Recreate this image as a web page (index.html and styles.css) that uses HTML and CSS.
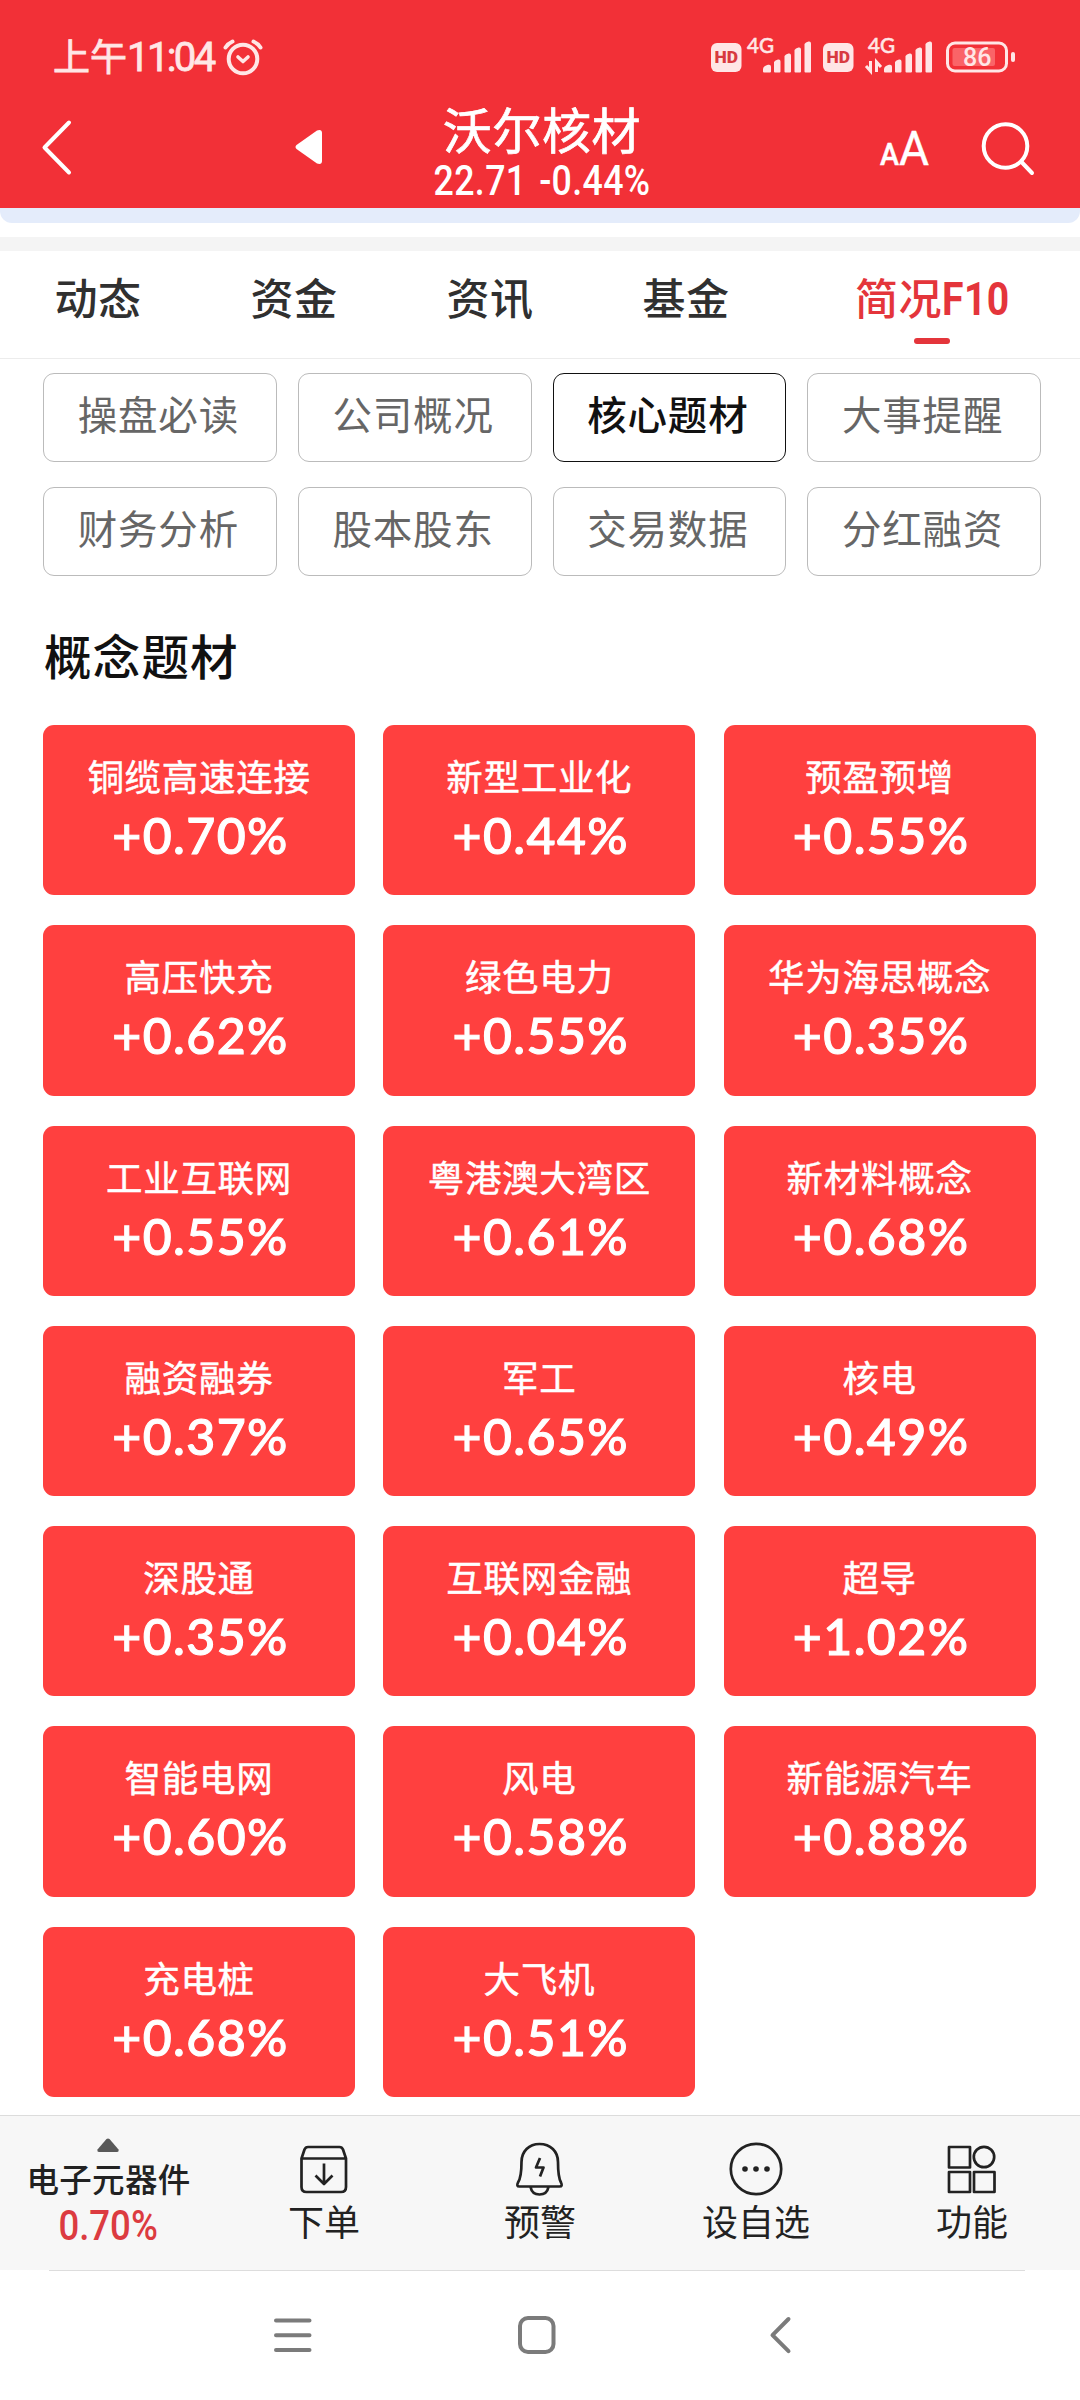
FILE: index.html
```html
<!DOCTYPE html>
<html lang="zh-CN">
<head>
  <meta charset="UTF-8">
  <meta name="viewport" content="width=device-width, initial-scale=1.0">
  <link rel="stylesheet" href="styles.css">
  <title>沃尔核材</title>
</head>
<body>
  <header>
    <div class="status-bar">
      <div class="status-time">上午<span>11:04</span></div>
      <svg class="alarm" width="40" height="38" viewBox="0 0 40 38" fill="none" stroke="#ffe6e6" stroke-width="4" stroke-linecap="round" stroke-linejoin="round">
        <circle cx="20" cy="21" r="14.3"/>
        <path d="M15 19l5 4.500 5-4.500" stroke-width="3.600"/>
        <path d="M2.500 9.500Q5 5.500 9.500 3.500M37.500 9.500Q35 5.500 30.500 3.500"/>
      </svg>
      <svg class="signals" width="310" height="44" viewBox="0 0 310 44" fill="#ffe6e6">
        <rect x="1" y="9" width="30.500" height="29" rx="6"/>
        <text class="hd" x="4.500" y="29" textLength="23.500" lengthAdjust="spacingAndGlyphs">HD</text>
        <text class="net" x="37" y="19" textLength="27" lengthAdjust="spacingAndGlyphs">4G</text>
        <path id="bars" d="M53 37.500v-2q0-3 3-4l2-.7q3-.7 3 2v4.700q0 1-1 1h-6q-1 0-1-1zM64 28q1-2 4-2.500 2.500-.5 2.500 2v10q0 1-1 1H65q-1 0-1-1zM74.500 22q1-2 4-2.500 2.500-.5 2.500 2v16q0 1-1 1h-4.500q-1 0-1-1zM84.500 16q1-2 4-2.500 2.500-.5 2.500 2v22q0 1-1 1h-4.500q-1 0-1-1zM94.500 10q1-2 4-2.500 2.500-.5 2.500 2v28q0 1-1 1h-4.500q-1 0-1-1z"/>
        <rect x="113" y="9" width="30.500" height="29" rx="6"/>
        <text class="hd" x="116.500" y="29" textLength="23.500" lengthAdjust="spacingAndGlyphs">HD</text>
        <text class="net" x="158" y="19" textLength="27" lengthAdjust="spacingAndGlyphs">4G</text>
        <use href="#bars" x="121"/>
        <path d="M160.500 27v10l-4.500-5M166.500 38V28l4.500 5" fill="none" stroke="#ffe6e6" stroke-width="3"/>
        <rect x="237.500" y="9" width="59" height="28" rx="7.500" fill="none" stroke="#ffe6e6" stroke-width="3"/>
        <rect x="242.500" y="14" width="42.500" height="18" rx="2" fill="#fa6468"/>
        <rect x="301" y="18" width="4" height="10" rx="2"/>
        <text class="level" x="253" y="32" textLength="28.500" lengthAdjust="spacingAndGlyphs">86</text>
      </svg>
    </div>
    <div class="title-bar">
      <svg class="back" width="34" height="56" viewBox="0 0 34 56" fill="none" stroke="#fff" stroke-width="4" stroke-linecap="round" stroke-linejoin="round">
        <path d="M28 3.500L3.500 28.500 28 53.500"/>
      </svg>
      <svg class="prev" width="28" height="36" viewBox="0 0 28 36" fill="#fff">
        <path d="M1.500 16Q-.5 18 1.500 20L22 34.500Q27 36 27 32V4Q27 0 22 1.500z"/>
      </svg>
      <div class="stock">
        <h1>沃尔核材</h1>
        <div class="quote"><span>22.71</span><span>-0.44%</span></div>
      </div>
      <svg class="font-size" width="50" height="60" viewBox="0 0 50 60" fill="#fff">
        <text x="0" y="50" font-size="32" font-weight="500" textLength="19" lengthAdjust="spacingAndGlyphs">A</text>
        <text x="19" y="50" font-size="49" textLength="30" lengthAdjust="spacingAndGlyphs">A</text>
      </svg>
      <svg class="search" width="56" height="56" viewBox="0 0 56 56" fill="none" stroke="#fff" stroke-width="4" stroke-linecap="round">
        <circle cx="25.500" cy="26" r="21.800"/>
        <path d="M41.500 42l10.500 11"/>
      </svg>
    </div>
  </header>

  <main>
    <div class="banner"></div>
    <div class="divider"></div>
    <nav class="tabs">
      <a>动态</a>
      <a>资金</a>
      <a>资讯</a>
      <a>基金</a>
      <a class="active">简况<span>F10</span></a>
    </nav>

    <div class="sections">
      <button>操盘必读</button>
      <button>公司概况</button>
      <button class="selected">核心题材</button>
      <button>大事提醒</button>
      <button>财务分析</button>
      <button>股本股东</button>
      <button>交易数据</button>
      <button>分红融资</button>
    </div>

    <h2>概念题材</h2>
    <div class="concepts">
      <div class="concept">铜缆高速连接<b>+0.70%</b></div>
      <div class="concept">新型工业化<b>+0.44%</b></div>
      <div class="concept">预盈预增<b>+0.55%</b></div>
      <div class="concept">高压快充<b>+0.62%</b></div>
      <div class="concept">绿色电力<b>+0.55%</b></div>
      <div class="concept">华为海思概念<b>+0.35%</b></div>
      <div class="concept">工业互联网<b>+0.55%</b></div>
      <div class="concept">粤港澳大湾区<b>+0.61%</b></div>
      <div class="concept">新材料概念<b>+0.68%</b></div>
      <div class="concept">融资融券<b>+0.37%</b></div>
      <div class="concept">军工<b>+0.65%</b></div>
      <div class="concept">核电<b>+0.49%</b></div>
      <div class="concept">深股通<b>+0.35%</b></div>
      <div class="concept">互联网金融<b>+0.04%</b></div>
      <div class="concept">超导<b>+1.02%</b></div>
      <div class="concept">智能电网<b>+0.60%</b></div>
      <div class="concept">风电<b>+0.58%</b></div>
      <div class="concept">新能源汽车<b>+0.88%</b></div>
      <div class="concept">充电桩<b>+0.68%</b></div>
      <div class="concept">大飞机<b>+0.51%</b></div>
    </div>
  </main>

  <footer>
    <div class="industry">
      <svg width="22" height="14" viewBox="0 0 22 14" fill="#595959"><path d="M9.500 1Q11 0 12.500 1L21.500 11.500Q22 14 20 14H2Q0 14 .5 11.500z"/></svg>
      <div class="industry-name">电子元器件</div>
      <div class="industry-rate">0.70%</div>
    </div>
    <div class="action">
      <svg width="56" height="56" viewBox="0 0 56 56">
        <path d="M5.500 17.500L8.500 8.500Q9.500 6 12 6H43.500Q46 6 47 8.500L50 17.500V46Q50 51 45 51H10.500Q5.500 51 5.500 46zM5.500 17.500H50M28 22.500V43M19.500 34.500L28 43L36.500 34.500"/>
      </svg>
      下单
    </div>
    <div class="action">
      <svg width="56" height="56" viewBox="0 0 56 56">
        <path d="M27.500 3C17 3 9.500 10.500 9.500 21C9.500 31 9 37 6 41.500Q4 45.500 7.500 45.500H47.500Q51 45.500 49 41.500C46.500 37 46 31 46 21C46 10.500 38.500 3 27.500 3zM18.500 46Q20 53.500 27.500 53.500T36.500 46M28 17L24 26.500H31.500L28 35.500"/>
      </svg>
      预警
    </div>
    <div class="action">
      <svg width="56" height="56" viewBox="0 0 56 56">
        <circle cx="28" cy="28" r="25.200"/>
        <g fill="#222" stroke="none"><circle cx="17" cy="28" r="2.800"/><circle cx="28" cy="28" r="2.800"/><circle cx="39" cy="28" r="2.800"/></g>
      </svg>
      设自选
    </div>
    <div class="action">
      <svg width="56" height="56" viewBox="0 0 56 56">
        <path d="M5 6H26V26.500H5zM5 31H26V51H5zM30 31H50.500V51H30z"/>
        <circle cx="40" cy="16" r="10.200"/>
      </svg>
      功能
    </div>
  </footer>

  <div class="system-nav">
    <svg width="40" height="40" viewBox="0 0 40 40"><path d="M4 5.500h33.500M4 20.300h33.500M4 35h33.500"/></svg>
    <svg width="40" height="40" viewBox="0 0 40 40"><rect x="4" y="3" width="33.500" height="34" rx="8"/></svg>
    <svg width="40" height="40" viewBox="0 0 40 40"><path d="M28.500 4L12.500 20.200l16 16"/></svg>
  </div>
</body>
</html>
```

FILE: styles.css
```css
/* Reset default margin and padding */
body, h1, h2 {
  margin: 0;
  padding: 0;
  font-weight: normal;
}

* {
  box-sizing: border-box;
}

body {
  font-family: Roboto, "Noto Sans CJK SC", sans-serif;
  background-color: #fff;
  width: 1080px;
  height: 2400px;
  overflow: hidden;
  display: flex;
  flex-direction: column;
}

svg {
  display: block;
  flex: none;
  overflow: visible;
}

/* Header */
header {
  background-color: #f23037;
  color: #fff;
  height: 208px;
  flex: none;
}

.status-bar {
  display: flex;
  height: 98px;
  padding: 30px 60px 0 53px;
  color: #ffe6e6;
}

.status-time {
  font-family: "Noto Sans CJK SC", sans-serif;
  font-size: 37px;
  line-height: 50px;
  width: 170px;
  white-space: nowrap;
  -webkit-text-stroke: 0.800px #ffe6e6;
}

.status-time span {
  font-family: Roboto, sans-serif;
  font-size: 40px;
  letter-spacing: -2.600px;
}

.alarm {
  margin-top: 8px;
}

.signals {
  margin: 4px 0 0 auto;
}

.hd {
  font: 900 16px Roboto, sans-serif;
  fill: #d83a40;
}

.net {
  font: 500 21px Lato, sans-serif;
  stroke: #ffe6e6;
  stroke-width: 0.500;
}

.level {
  font: 500 25px Roboto, sans-serif;
}

.title-bar {
  display: flex;
  align-items: flex-start;
  height: 110px;
  padding-left: 41px;
}

.back {
  margin-top: 21px;
}

.prev {
  margin: 31px 0 0 220px;
}

.stock {
  width: 240px;
  margin-left: 99px;
  text-align: center;
}

.stock h1 {
  padding-top: 3px;
  font-size: 49px;
  line-height: 64px;
  letter-spacing: 0.600px;
  white-space: nowrap;
  -webkit-text-stroke: 0.700px #fff;
}

.quote {
  display: flex;
  justify-content: center;
  gap: 15px;
  margin-top: -4px;
  font-size: 42px;
  font-weight: 500;
  line-height: 40px;
  letter-spacing: 0.400px;
  white-space: nowrap;
  transform: scaleX(0.85);
}

.font-size {
  margin: 17px 0 0 218px;
}

.font-size text {
  stroke: #fff;
  stroke-width: 0.500;
}

.search {
  margin: 22px 0 0 50px;
}

/* Content */
main {
  height: 1907px;
  flex: none;
}

.banner {
  height: 15px;
  background-color: #e4ecfb;
  border-radius: 0 0 12px 12px;
}

.divider {
  height: 14px;
  margin-top: 14px;
  background-color: #f4f4f4;
}

.tabs {
  display: flex;
  height: 108px;
  border-bottom: 1px solid #ececec;
}

.tabs a {
  width: 196px;
  text-align: center;
  font-size: 43px;
  font-weight: 500;
  line-height: 98px;
  letter-spacing: 0.500px;
  color: #303030;
}

.tabs .active {
  width: 296px;
  padding-right: 1px;
  color: #e4353b;
}

.tabs .active span {
  display: inline-block;
  font-size: 46px;
  font-weight: 700;
  line-height: 60px;
  width: 66px;
  transform: scaleX(0.850);
  transform-origin: left;
}

.tabs .active::after {
  content: "";
  display: block;
  width: 36px;
  height: 6px;
  margin: -11px auto 0;
  border-radius: 3px;
  background-color: #e4353b;
}

.sections {
  display: grid;
  grid-template-columns: repeat(4, 1fr);
  gap: 25px 21px;
  padding: 14px 39px 0 43px;
}

.sections button {
  height: 89px;
  padding: 0 3px 11px 0;
  border: 1px solid #bbb;
  border-radius: 11px;
  background-color: #fff;
  color: #666;
  font-family: inherit;
  font-size: 39.500px;
  letter-spacing: 0.800px;
}

.sections .selected {
  border-color: #111;
  color: #111;
  font-weight: 500;
}

h2 {
  padding: 48px 0 0 44px;
  height: 149px;
  font-size: 47.500px;
  font-weight: 500;
  line-height: 70px;
  letter-spacing: 1.200px;
  color: #111;
}

.concepts {
  display: grid;
  grid-template-columns: repeat(3, 312px);
  grid-auto-rows: 170.300px;
  gap: 30px 28.300px;
  padding-left: 43px;
}

.concept {
  padding-top: 27px;
  border-radius: 11px;
  background-color: #ff403f;
  color: #fff;
  text-align: center;
  font-size: 36.500px;
  line-height: 54px;
  letter-spacing: 0.700px;
  -webkit-text-stroke: 0.500px #fff;
}

.concept b {
  display: block;
  padding-left: 3px;
  font-family: Lato, sans-serif;
  font-size: 50px;
  font-weight: 500;
  line-height: 59px;
  letter-spacing: 1.400px;
  -webkit-text-stroke: 1.100px #fff;
}

/* Bottom toolbar */
footer {
  display: flex;
  height: 155px;
  flex: none;
  border-top: 1px solid #dcdcdc;
  background-color: #f7f7f7;
  color: #222;
}

.industry, .action {
  width: 216px;
  display: flex;
  flex-direction: column;
  align-items: center;
}

.industry {
  padding-top: 22px;
}

.industry-name {
  margin-top: 5px;
  padding-left: 1px;
  font-size: 32.500px;
  font-weight: 500;
  line-height: 48px;
  letter-spacing: 0.300px;
}

.industry-rate {
  font-size: 42px;
  font-weight: 500;
  line-height: 42px;
  color: #dc3b40;
  transform: scaleX(0.870);
}

.action {
  padding-top: 25px;
  font-size: 36px;
  line-height: 54px;
}

.action svg {
  fill: none;
  stroke: #222;
  stroke-width: 2.700;
  stroke-linejoin: round;
}

.system-nav {
  display: flex;
  justify-content: space-between;
  height: 130px;
  margin: 0 55px 0 49px;
  padding: 44px 225px 0 223px;
  border-top: 1px solid #ddd;
}

.system-nav svg {
  fill: none;
  stroke: #7b7b7b;
  stroke-width: 4;
  stroke-linecap: round;
  stroke-linejoin: round;
}
```
